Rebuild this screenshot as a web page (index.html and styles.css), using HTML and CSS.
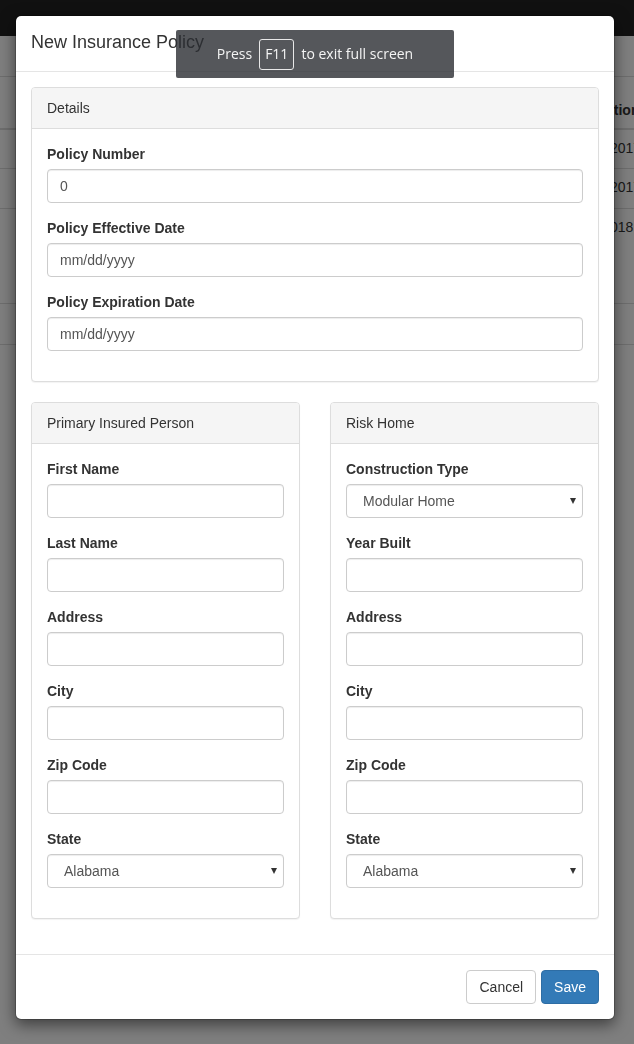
FILE: index.html
```html
<!DOCTYPE html>
<html lang="en">
<head>
<meta charset="utf-8">
<title>New Insurance Policy</title>
<link rel="stylesheet" href="styles.css">
</head>
<body>
<div class="page">
  <header class="navbar"></header>
  <div class="table-wrap">
    <table class="policies">
      <colgroup><col class="col-main"><col class="col-exp"></colgroup>
      <thead>
        <tr><th></th><th>Expiration</th></tr>
      </thead>
      <tbody>
        <tr class="row-a"><td></td><td>01/01/2017</td></tr>
        <tr class="row-b"><td></td><td>01/01/2017</td></tr>
        <tr class="row-c"><td></td><td>12/1/2018</td></tr>
        <tr class="row-d"><td></td><td></td></tr>
      </tbody>
    </table>
  </div>
</div>

<div class="backdrop"></div>

<div class="modal">
  <div class="modal-header">
    <h4 class="modal-title">New Insurance Policy</h4>
  </div>
  <div class="modal-body">
    <div class="panel">
      <div class="panel-heading">Details</div>
      <div class="panel-body">
        <div class="form-group">
          <label>Policy Number</label>
          <input class="form-control" type="text" value="0">
        </div>
        <div class="form-group">
          <label>Policy Effective Date</label>
          <input class="form-control" type="text" placeholder="mm/dd/yyyy">
        </div>
        <div class="form-group">
          <label>Policy Expiration Date</label>
          <input class="form-control" type="text" placeholder="mm/dd/yyyy">
        </div>
      </div>
    </div>

    <div class="panel-row">
      <div class="panel">
        <div class="panel-heading">Primary Insured Person</div>
        <div class="panel-body">
          <div class="form-group"><label>First Name</label><input class="form-control" type="text"></div>
          <div class="form-group"><label>Last Name</label><input class="form-control" type="text"></div>
          <div class="form-group"><label>Address</label><input class="form-control" type="text"></div>
          <div class="form-group"><label>City</label><input class="form-control" type="text"></div>
          <div class="form-group"><label>Zip Code</label><input class="form-control" type="text"></div>
          <div class="form-group">
            <label>State</label>
            <div class="select-wrap">
              <select class="form-control"><option>Alabama</option><option>Alaska</option></select>
            </div>
          </div>
        </div>
      </div>

      <div class="panel">
        <div class="panel-heading">Risk Home</div>
        <div class="panel-body">
          <div class="form-group">
            <label>Construction Type</label>
            <div class="select-wrap">
              <select class="form-control"><option>Modular Home</option><option>Site Built</option></select>
            </div>
          </div>
          <div class="form-group"><label>Year Built</label><input class="form-control" type="text"></div>
          <div class="form-group"><label>Address</label><input class="form-control" type="text"></div>
          <div class="form-group"><label>City</label><input class="form-control" type="text"></div>
          <div class="form-group"><label>Zip Code</label><input class="form-control" type="text"></div>
          <div class="form-group">
            <label>State</label>
            <div class="select-wrap">
              <select class="form-control"><option>Alabama</option><option>Alaska</option></select>
            </div>
          </div>
        </div>
      </div>
    </div>
  </div>
  <div class="modal-footer">
    <button class="btn btn-default" type="button">Cancel</button>
    <button class="btn btn-primary" type="button">Save</button>
  </div>
</div>

<div class="fs-bubble">Press <kbd class="key">F11</kbd> to exit full screen</div>
</body>
</html>
```

FILE: styles.css
```css
* { box-sizing: border-box; }

html, body {
  margin: 0;
  height: 100%;
}

body {
  overflow: hidden;
  background: #fff;
  font-family: "Liberation Sans", Arial, Helvetica, sans-serif;
  font-size: 14px;
  line-height: 20px;
  color: #333;
}

/* ---------- page behind the modal ---------- */
.page {
  width: 100%;
  height: 100%;
  overflow: hidden;
}

.navbar {
  height: 36px;
  background: #222;
  margin-bottom: 40px;
}

.table-wrap {
  width: 100%;
  overflow: hidden;
}

.policies {
  width: 700px;
  table-layout: fixed;
  border-collapse: separate;
  border-spacing: 0;
  border-top: 1px solid #ddd;
}

.col-main { width: 563px; }
.col-exp { width: 137px; }

.policies th,
.policies td {
  padding: 8px;
  white-space: nowrap;
  overflow: hidden;
  text-align: left;
  color: #333;
}

.policies th {
  height: 53px;
  vertical-align: bottom;
  font-weight: bold;
  border-bottom: 2px solid #ddd;
}

.policies td {
  vertical-align: top;
  border-bottom: 1px solid #ddd;
}

.row-a td { height: 39px; }
.row-b td { height: 40px; }
.row-c td { height: 95px; }
.row-d td { height: 41px; }

.backdrop {
  position: fixed;
  top: 0;
  left: 0;
  right: 0;
  bottom: 0;
  background: rgba(0, 0, 0, 0.5);
}

/* ---------- modal ---------- */
.modal {
  position: absolute;
  top: 15px;
  left: 15px;
  width: 600px;
  background: #fff;
  border: 1px solid rgba(0, 0, 0, 0.2);
  border-radius: 6px;
  box-shadow: 0 5px 15px rgba(0, 0, 0, 0.5);
  background-clip: padding-box;
}

.modal-header {
  padding: 14px 15px 15px;
  border-bottom: 1px solid #e5e5e5;
}

.modal-title {
  margin: 0;
  font-size: 18px;
  font-weight: normal;
  line-height: 1.42857;
  color: #333;
}

.modal-body {
  padding: 15px;
}

.modal-footer {
  padding: 15px;
  border-top: 1px solid #e5e5e5;
  display: flex;
  justify-content: flex-end;
  gap: 5px;
}

/* ---------- panels ---------- */
.panel {
  background: #fff;
  border: 1px solid #ddd;
  border-radius: 4px;
  box-shadow: 0 1px 1px rgba(0, 0, 0, 0.05);
  margin-bottom: 20px;
}

.panel-heading {
  padding: 10px 15px;
  background: #f5f5f5;
  border-bottom: 1px solid #ddd;
  border-radius: 3px 3px 0 0;
  color: #333;
}

.panel-body {
  padding: 15px;
}

.panel-row {
  display: grid;
  grid-template-columns: 1fr 1fr;
  column-gap: 30px;
}

/* ---------- form ---------- */
.form-group {
  margin-bottom: 15px;
}

.form-group label {
  display: inline-block;
  margin-bottom: 5px;
  font-weight: bold;
  color: #333;
}

.form-control {
  display: block;
  width: 100%;
  height: 34px;
  padding: 6px 12px;
  font-family: "Liberation Sans", Arial, Helvetica, sans-serif;
  font-size: 14px;
  line-height: 20px;
  color: #555;
  background: #fff;
  border: 1px solid #ccc;
  border-radius: 4px;
  box-shadow: inset 0 1px 1px rgba(0, 0, 0, 0.075);
  margin: 0;
}

.form-control::placeholder {
  color: #555;
  opacity: 1;
}

.select-wrap {
  position: relative;
}

.select-wrap select {
  appearance: none;
  -webkit-appearance: none;
  padding-left: 16px;
  padding-right: 24px;
}

.select-wrap::after {
  content: "";
  position: absolute;
  right: 7px;
  top: 14px;
  border-left: 3px solid transparent;
  border-right: 3px solid transparent;
  border-top: 6px solid #333;
  pointer-events: none;
}

/* ---------- buttons ---------- */
.btn {
  display: inline-block;
  height: 34px;
  padding: 6px 12px;
  font-family: "Liberation Sans", Arial, Helvetica, sans-serif;
  font-size: 14px;
  line-height: 20px;
  border: 1px solid transparent;
  border-radius: 4px;
  cursor: pointer;
}

.btn-default {
  color: #333;
  background: #fff;
  border-color: #ccc;
}

.btn-primary {
  color: #fff;
  background: #337ab7;
  border-color: #2e6da4;
}

/* ---------- full screen bubble ---------- */
.fs-bubble {
  position: absolute;
  top: 30px;
  left: 176px;
  width: 278px;
  height: 48px;
  display: flex;
  align-items: center;
  justify-content: center;
  gap: 7px;
  background: rgba(42, 45, 50, 0.8);
  border-radius: 2px;
  color: #f4f4f4;
  font-family: "Open Sans", "Noto Sans", sans-serif;
  font-size: 14px;
  line-height: 20px;
  white-space: nowrap;
}

.key {
  display: inline-block;
  height: 31px;
  padding: 4px 5px 0;
  border: 1px solid #e8e8e8;
  border-radius: 3px;
  font-family: "Open Sans", "Noto Sans", sans-serif;
  font-size: 14px;
  line-height: 20px;
  color: #f4f4f4;
}
```
